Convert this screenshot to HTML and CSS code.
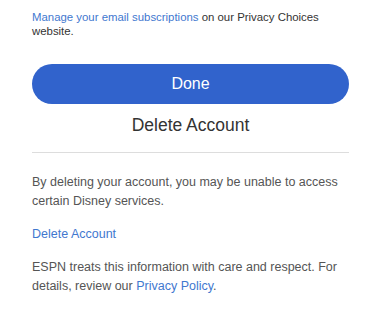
FILE: index.html
```html
<!DOCTYPE html>
<html lang="en">
<head>
    <meta charset="UTF-8">
    <meta name="viewport" content="width=device-width, initial-scale=1.0">
    <title>Account Settings</title>
    <link rel="stylesheet" href="styles.css">
</head>
<body>
    <div class="panel">
        <p class="privacy-note">
            <a href="#">Manage your email subscriptions</a> on our Privacy Choices website.
        </p>

        <button class="done-button">Done</button>

        <h2 class="delete-title">Delete Account</h2>
        <hr class="divider">

        <p class="info">By deleting your account, you may be unable to access certain Disney services.</p>
        <p class="info"><a href="#">Delete Account</a></p>
        <p class="info">ESPN treats this information with care and respect. For details, review our <a href="#">Privacy Policy</a>.</p>
    </div>
</body>
</html>
```

FILE: styles.css
```css
body {
    font-family: "Liberation Sans", Arial, sans-serif;
    background-color: #fff;
    margin: 0;
}
.panel {
    width: 317px;
    padding: 10px 0 0 32px;
}
a {
    color: #3f78cf;
    text-decoration: none;
}
.privacy-note {
    margin: 0;
    font-size: 11.4px;
    line-height: 14px;
    color: #333;
}
.done-button {
    display: block;
    width: 100%;
    height: 40px;
    margin-top: 26px;
    border: none;
    border-radius: 20px;
    background-color: #3163cc;
    color: #fff;
    font-family: inherit;
    font-size: 16px;
    cursor: pointer;
}
.delete-title {
    margin: 10px 0 0;
    font-size: 17.5px;
    font-weight: normal;
    line-height: 22px;
    text-align: center;
    color: #333;
}
.divider {
    margin: 16px 0 20px;
    border: none;
    border-top: 1px solid #ddd;
}
.info {
    margin: 0 0 14px;
    font-size: 12.5px;
    line-height: 19px;
    color: #555;
}
```
